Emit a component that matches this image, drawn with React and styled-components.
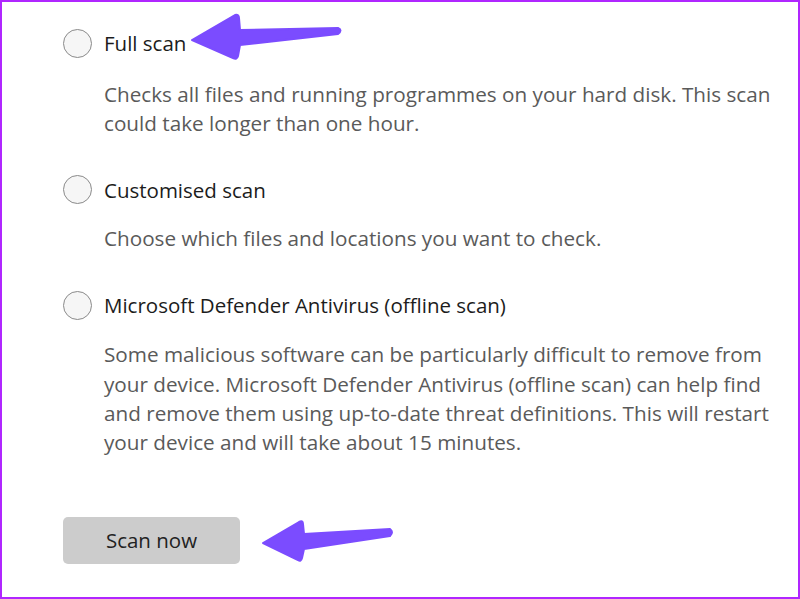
import React from "react";
import styled, { createGlobalStyle } from "styled-components";

const Global = createGlobalStyle`
  html, body { margin: 0; padding: 0; background: #fff; }
  body { font-family: "Open Sans", "Noto Sans", sans-serif; }
`;

const Frame = styled.div`
  box-sizing: border-box;
  width: 800px;
  height: 599px;
  border: 2px solid #b026ff;
  background: #fff;
  position: relative;
  overflow: hidden;
  padding: 25px 0 0 61px;
`;

const Option = styled.div`
  display: flex;
  flex-direction: column;
  margin-bottom: ${(p) => p.$gap}px;
`;

const LabelRow = styled.label`
  display: flex;
  align-items: center;
  gap: 12px;
  height: 32px;
`;

const Radio = styled.span`
  box-sizing: border-box;
  width: 29px;
  height: 29px;
  border-radius: 50%;
  border: 1.5px solid #8a8a8a;
  background: #f6f6f6;
  flex: none;
`;

const LabelText = styled.span`
  font-size: 20.5px;
  color: #1c1c1c;
`;

const Desc = styled.p`
  margin: ${(p) => p.$top}px 0 0 41px;
  font-size: 20.7px;
  line-height: 29.4px;
  color: #5a5a5a;
  white-space: nowrap;
`;

const Button = styled.button`
  width: 177px;
  height: 47px;
  padding: 0;
  border: none;
  border-radius: 5px;
  background: #cccccc;
  color: #222;
  font-family: inherit;
  font-size: 20.5px;
`;

const Overlay = styled.svg`
  position: absolute;
  left: 0;
  top: 0;
  pointer-events: none;
`;

export default function App() {
  return (
    <>
      <Global />
      <Frame>
        <Option $gap={35}>
          <LabelRow>
            <Radio />
            <LabelText>Full scan</LabelText>
          </LabelRow>
          <Desc $top={21}>
            Checks all files and running programmes on your hard disk. This scan
            <br />
            could take longer than one hour.
          </Desc>
        </Option>
        <Option $gap={36}>
          <LabelRow>
            <Radio />
            <LabelText>Customised scan</LabelText>
          </LabelRow>
          <Desc $top={18}>Choose which files and locations you want to check.</Desc>
        </Option>
        <Option $gap={59}>
          <LabelRow>
            <Radio />
            <LabelText>Microsoft Defender Antivirus (offline scan)</LabelText>
          </LabelRow>
          <Desc $top={19}>
            Some malicious software can be particularly difficult to remove from
            <br />
            your device. Microsoft Defender Antivirus (offline scan) can help find
            <br />
            and remove them using up-to-date threat definitions. This will restart
            <br />
            your device and will take about 15 minutes.
          </Desc>
        </Option>
        <Button>Scan now</Button>
        <Overlay width="800" height="599" viewBox="0 0 800 599">
          <path
            d="M190 38 L233 13 Q237 12 237 16 L238 28 L336 26 Q341 28 336 32 L238 43 L236 54 Q235 58 231 56 Z"
            fill="#7b4cff"
            stroke="#7b4cff"
            strokeWidth="2"
            strokeLinejoin="round"
          />
          <path
            d="M261 541 L297 520 Q301 518 301 522 L302 532 L388 527 Q392 530 388 534 L302 547 L300 556 Q299 560 296 558 Z"
            fill="#7b4cff"
            stroke="#7b4cff"
            strokeWidth="2"
            strokeLinejoin="round"
          />
        </Overlay>
      </Frame>
    </>
  );
}
